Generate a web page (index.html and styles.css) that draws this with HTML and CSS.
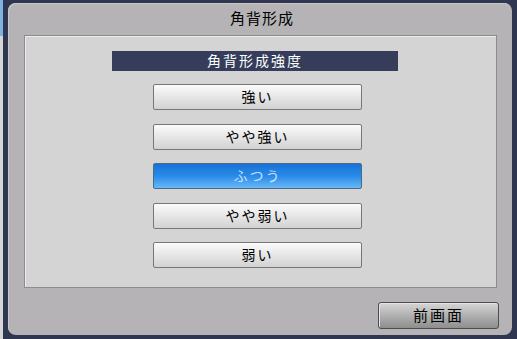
FILE: index.html
```html
<!DOCTYPE html>
<html>
<head>
<meta charset="utf-8">
<title>角背形成</title>
<link rel="stylesheet" href="styles.css">
</head>
<body>
<div class="desk">
  <div class="side">
    <div class="side-top"></div>
    <div class="side-rest"></div>
  </div>
  <div class="dialog">
    <div class="title">角背形成</div>
    <div class="panel">
      <div class="caption">角背形成強度</div>
      <div class="choices">
        <a href="#" class="btn">強い</a>
        <a href="#" class="btn">やや強い</a>
        <a href="#" class="btn on">ふつう</a>
        <a href="#" class="btn">やや弱い</a>
        <a href="#" class="btn">弱い</a>
      </div>
    </div>
    <div class="footer">
      <a href="#" class="back">前画面</a>
    </div>
  </div>
</div>
</body>
</html>
```

FILE: styles.css
```css
html,body{
margin:0;
padding:0;
}
body{
width:517px;
height:339px;
overflow:hidden;
background:#2e3650;
font-family:"Noto Sans CJK JP","DejaVu Sans",sans-serif;
}
a{
text-decoration:none;
}
.desk{
display:flex;
height:339px;
}
.side{
width:3px;
display:flex;
flex-direction:column;
}
.side-top{
height:36px;
background:#7fb2de;
}
.side-rest{
flex:1;
background:#d6d6d6;
}
.dialog{
margin:3px 5px 4px 5px;
flex:1;
background:#b5b3b5;
border-radius:8px;
box-shadow:inset 1px 1px 0 #c8c6c8;
display:flex;
flex-direction:column;
}
.title{
height:32px;
line-height:30px;
text-align:center;
font-size:15px;
color:#000;
padding-left:4px;
letter-spacing:1px;
}
.panel{
margin:0 15px 0 16px;
height:251px;
background:#d4d4d4;
border:1px solid #8c8c8c;
box-shadow:inset 1px 1px 0 #ececec;
display:flex;
flex-direction:column;
align-items:center;
}
.caption{
margin:15px 11px 0 0;
width:286px;
height:20px;
line-height:19px;
background:#353d5a;
color:#fff;
text-align:center;
font-size:14px;
letter-spacing:2px;
}
.choices{
margin:13px 6px 0 0;
display:flex;
flex-direction:column;
gap:13.5px;
}
.btn{
display:block;
width:207px;
height:24px;
line-height:23px;
border:1px solid #777;
border-radius:2px;
background:linear-gradient(#fbfbfb,#e6e6e6 50%,#d2d2d2);
color:#000;
text-align:center;
font-size:14px;
letter-spacing:2px;
}
.btn.on{
background:linear-gradient(#1773d6,#2a8ae8 50%,#68b8f6);
border-color:#4a6a8a;
color:#c4e2ff;
}
.footer{
flex:1;
display:flex;
justify-content:flex-end;
align-items:flex-start;
padding:14px 13px 0 0;
}
.back{
display:block;
width:119px;
height:25px;
line-height:24px;
border:1px solid #4d4d4d;
border-radius:3px;
background:linear-gradient(#d6d6d6,#b0b0b0 50%,#8e8e8e);
box-shadow:inset 1px 1px 0 #e4e4e4;
color:#000;
text-align:center;
font-size:15px;
letter-spacing:2px;
}
```
